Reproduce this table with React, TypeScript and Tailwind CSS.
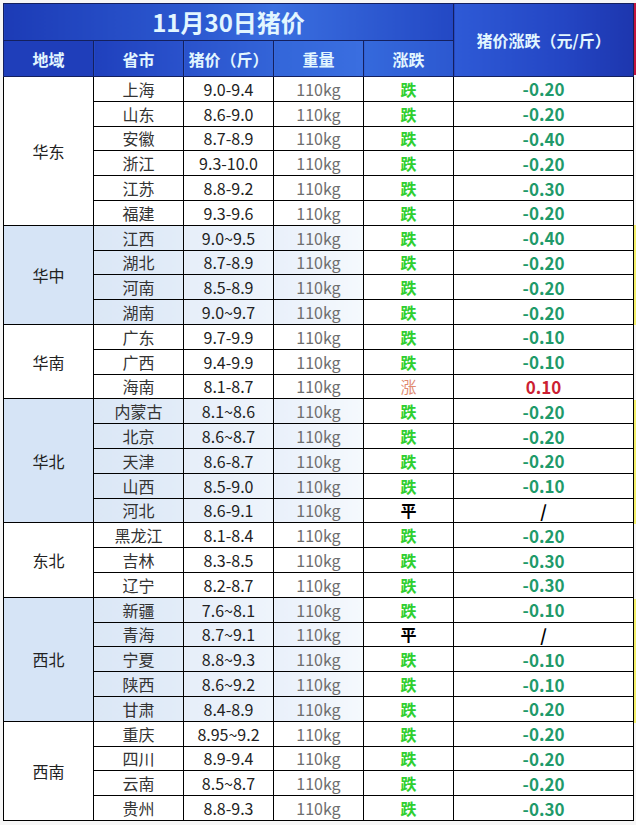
import React from 'react';

type Row = { city: string; price: string; trend: '跌' | '涨' | '平'; change: string };
type Region = { name: string; shaded: boolean; rows: Row[] };

const regions: Region[] = [
  {
    name: '华东',
    shaded: false,
    rows: [
      { city: '上海', price: '9.0-9.4', trend: '跌', change: '-0.20' },
      { city: '山东', price: '8.6-9.0', trend: '跌', change: '-0.20' },
      { city: '安徽', price: '8.7-8.9', trend: '跌', change: '-0.40' },
      { city: '浙江', price: '9.3-10.0', trend: '跌', change: '-0.20' },
      { city: '江苏', price: '8.8-9.2', trend: '跌', change: '-0.30' },
      { city: '福建', price: '9.3-9.6', trend: '跌', change: '-0.20' },
    ],
  },
  {
    name: '华中',
    shaded: true,
    rows: [
      { city: '江西', price: '9.0~9.5', trend: '跌', change: '-0.40' },
      { city: '湖北', price: '8.7-8.9', trend: '跌', change: '-0.20' },
      { city: '河南', price: '8.5-8.9', trend: '跌', change: '-0.20' },
      { city: '湖南', price: '9.0~9.7', trend: '跌', change: '-0.20' },
    ],
  },
  {
    name: '华南',
    shaded: false,
    rows: [
      { city: '广东', price: '9.7-9.9', trend: '跌', change: '-0.10' },
      { city: '广西', price: '9.4-9.9', trend: '跌', change: '-0.10' },
      { city: '海南', price: '8.1-8.7', trend: '涨', change: '0.10' },
    ],
  },
  {
    name: '华北',
    shaded: true,
    rows: [
      { city: '内蒙古', price: '8.1~8.6', trend: '跌', change: '-0.20' },
      { city: '北京', price: '8.6~8.7', trend: '跌', change: '-0.20' },
      { city: '天津', price: '8.6-8.7', trend: '跌', change: '-0.20' },
      { city: '山西', price: '8.5-9.0', trend: '跌', change: '-0.10' },
      { city: '河北', price: '8.6-9.1', trend: '平', change: '/' },
    ],
  },
  {
    name: '东北',
    shaded: false,
    rows: [
      { city: '黑龙江', price: '8.1-8.4', trend: '跌', change: '-0.20' },
      { city: '吉林', price: '8.3-8.5', trend: '跌', change: '-0.30' },
      { city: '辽宁', price: '8.2-8.7', trend: '跌', change: '-0.30' },
    ],
  },
  {
    name: '西北',
    shaded: true,
    rows: [
      { city: '新疆', price: '7.6~8.1', trend: '跌', change: '-0.10' },
      { city: '青海', price: '8.7~9.1', trend: '平', change: '/' },
      { city: '宁夏', price: '8.8~9.3', trend: '跌', change: '-0.10' },
      { city: '陕西', price: '8.6~9.2', trend: '跌', change: '-0.10' },
      { city: '甘肃', price: '8.4-8.9', trend: '跌', change: '-0.20' },
    ],
  },
  {
    name: '西南',
    shaded: false,
    rows: [
      { city: '重庆', price: '8.95~9.2', trend: '跌', change: '-0.20' },
      { city: '四川', price: '8.9-9.4', trend: '跌', change: '-0.20' },
      { city: '云南', price: '8.5~8.7', trend: '跌', change: '-0.20' },
      { city: '贵州', price: '8.8-9.3', trend: '跌', change: '-0.30' },
    ],
  },
];

const trendColor = { 跌: 'text-[#2fcf2f] font-bold', 涨: 'text-[#e08a70]', 平: 'text-black font-bold' };

function changeColor(c: string) {
  if (c === '/') return 'text-black';
  if (c.startsWith('-')) return 'text-[#1f9a6a]';
  return 'text-[#cc1f33]';
}

export default function App() {
  const cell = 'border border-black text-center p-0 leading-none';
  const head = 'border border-[#14205e] text-center text-[16px] font-bold text-[#e2f6ff]';

  return (
    <div className="min-h-[825px] w-[636px] bg-[#f6f6f6] pl-[3px] pt-[3px] flex font-['Noto_Sans_CJK_SC',sans-serif]">
      <table className="w-[630px] self-start table-fixed border-collapse bg-white text-[16px]">
        <colgroup>
          <col className="w-[90px]" />
          <col className="w-[90px]" />
          <col className="w-[90px]" />
          <col className="w-[90px]" />
          <col className="w-[90px]" />
          <col className="w-[180px]" />
        </colgroup>
        <thead>
          <tr className="h-[36px]">
            <th
              colSpan={5}
              className="border border-[#14205e] text-center text-[24px] font-bold text-[#e2f6ff] bg-[linear-gradient(90deg,#1c3bb6_0%,#2d5bd2_45%,#3a6fe0_60%,#2348c4_100%)]"
            >
              11月30日猪价
            </th>
            <th
              rowSpan={2}
              className={`${head} text-[15px] bg-[linear-gradient(90deg,#2e5ad6_0%,#2446c4_60%,#1d36ae_100%)]`}
            >
              猪价涨跌（元/斤）
            </th>
          </tr>
          <tr className="h-[36px]">
            <th className={`${head} bg-[#1f3eba]`}>地域</th>
            <th className={`${head} bg-[linear-gradient(90deg,#1f40bd,#2a52cc)]`}>省市</th>
            <th className={`${head} bg-[linear-gradient(90deg,#2a52cc,#3364d8)]`}>猪价（斤）</th>
            <th className={`${head} bg-[linear-gradient(90deg,#3366d9,#3a6ee0)]`}>重量</th>
            <th className={`${head} bg-[linear-gradient(90deg,#3569dc,#2c58d0)]`}>涨跌</th>
          </tr>
        </thead>
        <tbody>
          {regions.map((region) =>
            region.rows.map((row, i) => (
              <tr key={region.name + row.city} className="h-[24.8px]">
                {i === 0 && (
                  <td
                    rowSpan={region.rows.length}
                    className={`${cell} text-[#222] ${region.shaded ? 'bg-[#d6e4f6]' : 'bg-white'}`}
                  >
                    {region.name}
                  </td>
                )}
                <td className={`${cell} text-[#333] ${region.shaded ? 'bg-[linear-gradient(90deg,#dbe7f6,#e2ecf8)]' : ''}`}>
                  {row.city}
                </td>
                <td className={`${cell} text-[#222] ${region.shaded ? 'bg-[linear-gradient(90deg,#e6eef9,#eef4fb)]' : ''}`}>
                  {row.price}
                </td>
                <td className={`${cell} text-[#6e6e6e] ${region.shaded ? 'bg-[linear-gradient(90deg,#e9f0fa,#f5f9fd)]' : ''}`}>
                  110kg
                </td>
                <td className={`${cell} ${trendColor[row.trend]}`}>{row.trend}</td>
                <td className={`${cell} text-[17px] font-bold ${changeColor(row.change)}`}>{row.change}</td>
              </tr>
            ))
          )}
        </tbody>
      </table>
      <div className="flex w-[3px] flex-col">
        <div className="h-[72px] bg-[#c3163e]" />
        <div className="h-[150px]" />
        <div className="h-[100px] bg-[#f4ef6a]" />
        <div className="h-[75px]" />
        <div className="h-[124px] bg-[#f4ef6a]" />
        <div className="h-[75px]" />
        <div className="h-[124px] bg-[#f4ef6a]" />
      </div>
    </div>
  );
}
